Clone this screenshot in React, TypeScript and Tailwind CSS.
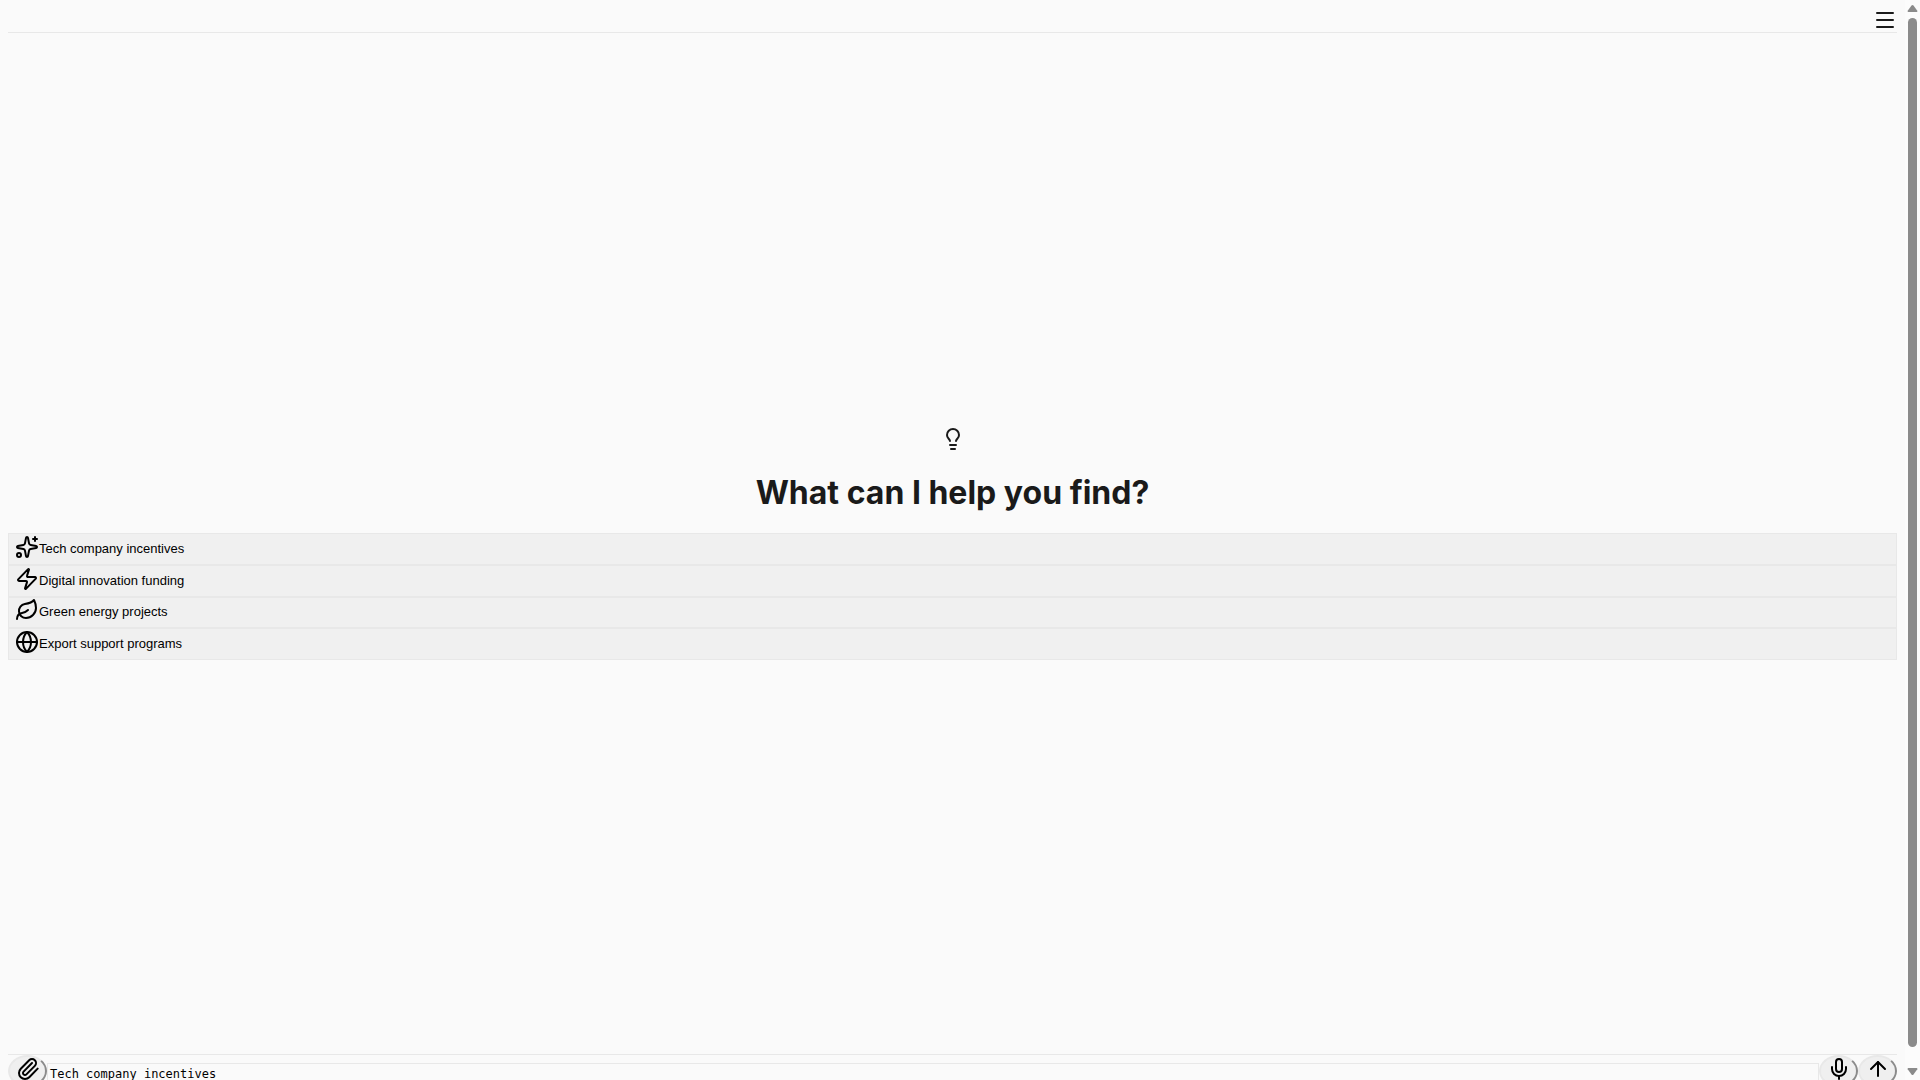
import { ArrowUp, Globe, Leaf, Lightbulb, Menu, Mic, Paperclip, Sparkles, Zap } from "lucide-react";

const suggestions = [
  { icon: Sparkles, label: "Tech company incentives" },
  { icon: Zap, label: "Digital innovation funding" },
  { icon: Leaf, label: "Green energy projects" },
  { icon: Globe, label: "Export support programs" },
];

const roundButton =
  "flex h-8 w-[39px] shrink-0 items-start justify-center rounded-[50%] border-2 border-t-[#e8e8e8] border-l-[#e8e8e8] border-r-[#8b8b8b] border-b-[#8b8b8b] bg-[#efefef] text-black";

function ScrollTrack() {
  return (
    <div className="flex w-[15px] shrink-0 flex-col items-center justify-between bg-[#fcfcfc] py-1" aria-hidden="true">
      <svg width="11" height="9" viewBox="0 0 11 9" fill="#8b8b8b">
        <path d="M4.5 1.6Q5.5 .4 6.5 1.6L10.3 6.8Q10.7 8 9.7 8H1.3Q.3 8 .7 6.8Z" />
      </svg>
      <div className="mt-[5px] mb-5 w-[9px] flex-1 rounded-full bg-[#8b8b8b]" />
      <svg width="11" height="9" viewBox="0 0 11 9" fill="#8b8b8b">
        <path d="M4.5 7.4Q5.5 8.6 6.5 7.4L10.3 2.2Q10.7 1 9.7 1H1.3Q.3 1 .7 2.2Z" />
      </svg>
    </div>
  );
}

export default function App() {
  return (
    <div className="flex h-screen overflow-hidden bg-[#fafafa] text-[#1a1a1a]">
      <div className="flex min-w-0 flex-1 flex-col px-2 pt-2">
        <header className="flex shrink-0 justify-end border-b border-[#e8e8e8]">
          <button type="button" aria-label="Menu">
            <Menu size={24} />
          </button>
        </header>

        <main className="flex flex-1 flex-col justify-center">
          <div className="flex flex-col items-center">
            <Lightbulb size={24} />
            <h1 className="mt-[22px] mb-[21px] font-['Inter',sans-serif] text-[32px] leading-[39px] font-bold">
              What can I help you find?
            </h1>
          </div>
          <div className="grid h-[127px] grid-rows-4">
            {suggestions.map(({ icon: Icon, label }) => (
              <button
                key={label}
                type="button"
                className="flex items-center border border-[#e8e8e8] bg-[#f0f0f0] px-[6px] py-px font-['Liberation_Sans',sans-serif] text-[13px] leading-4 text-black"
              >
                <span className="pb-1">
                  <Icon size={24} />
                </span>
                {label}
              </button>
            ))}
          </div>
        </main>

        <footer className="flex h-[26px] shrink-0 items-start border-t border-[#e8e8e8]">
          <button type="button" aria-label="Attach file" className={roundButton}>
            <Paperclip size={24} />
          </button>
          <textarea
            aria-label="Message"
            defaultValue="Tech company incentives"
            className="mt-2 h-9 min-w-0 flex-1 resize-none border border-[#e8e8e8] bg-transparent p-[2px] font-['DejaVu_Sans_Mono',monospace] text-[12px] leading-4 text-black outline-none"
          />
          <button type="button" aria-label="Voice input" className={roundButton}>
            <Mic size={24} />
          </button>
          <button type="button" aria-label="Send" className={roundButton}>
            <ArrowUp size={24} />
          </button>
        </footer>
      </div>
      <ScrollTrack />
    </div>
  );
}
